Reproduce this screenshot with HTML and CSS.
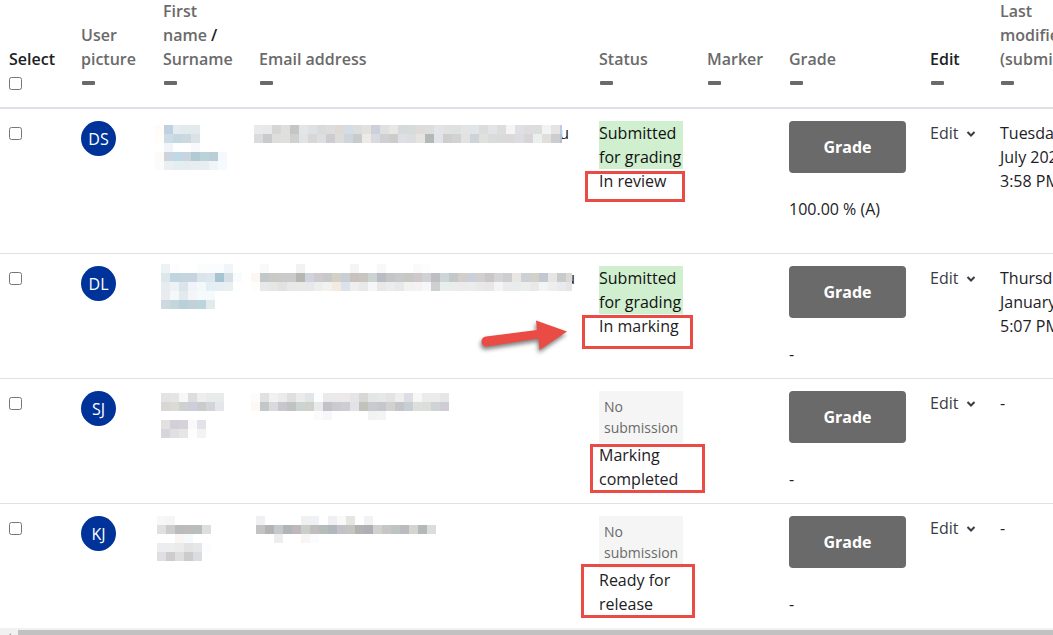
FILE: index.html
```html
<!DOCTYPE html>
<html lang="en">
<head>
    <meta charset="UTF-8">
    <meta name="viewport" content="width=device-width, initial-scale=1.0">
    <title>Submissions</title>
    <link rel="stylesheet" href="styles.css">
</head>
<body>

<main class="table-scroll">
    <table class="submissions">
        <colgroup>
            <col class="col-select">
            <col class="col-picture">
            <col class="col-name">
            <col class="col-email">
            <col class="col-status">
            <col class="col-marker">
            <col class="col-grade">
            <col class="col-edit">
            <col class="col-modified">
        </colgroup>
        <thead>
            <tr>
                <th scope="col">
                    <label for="selectAll">Select</label>
                    <div class="tick"><input type="checkbox" id="selectAll"></div>
                </th>
                <th scope="col"><a href="#">User picture</a><button class="collapse" aria-label="Hide User picture"></button></th>
                <th scope="col"><a href="#">First name</a> / <a href="#">Surname</a><button class="collapse" aria-label="Hide Full name"></button></th>
                <th scope="col"><a href="#">Email address</a><button class="collapse" aria-label="Hide Email address"></button></th>
                <th scope="col"><a href="#">Status</a><button class="collapse" aria-label="Hide Status"></button></th>
                <th scope="col"><a href="#">Marker</a><button class="collapse" aria-label="Hide Marker"></button></th>
                <th scope="col"><a href="#">Grade</a><button class="collapse" aria-label="Hide Grade"></button></th>
                <th scope="col">Edit<button class="collapse" aria-label="Hide Edit"></button></th>
                <th scope="col"><a href="#">Last modified (submission)</a><button class="collapse" aria-label="Hide Last modified"></button></th>
            </tr>
        </thead>
        <tbody>
            <tr class="row-tall">
                <td><div class="tick"><input type="checkbox" aria-label="Select DS"></div></td>
                <td><a class="avatar" href="#">DS</a></td>
                <td><svg class="mosaic name-ds" data-mosaic="nameDS" aria-hidden="true"></svg></td>
                <td><div class="email-end inset">u</div><svg class="mosaic email-ds" data-mosaic="emailDS" aria-hidden="true"></svg></td>
                <td>
                    <div class="submitted">Submitted for grading</div>
                    <div>In review</div>
                    <span class="mark mark-review"></span>
                </td>
                <td></td>
                <td><a class="grade-btn" href="#">Grade</a><div>100.00 % (A)</div></td>
                <td><button class="edit-btn">Edit<svg class="chevron" viewBox="0 0 10 8"><path d="M1.5 2l3.5 3.5L8.500 2"/></svg></button></td>
                <td>Tuesday,<br>July 2021,<br>3:58 PM</td>
            </tr>
            <tr>
                <td><div class="tick"><input type="checkbox" aria-label="Select DL"></div></td>
                <td><a class="avatar" href="#">DL</a></td>
                <td><svg class="mosaic name-dl" data-mosaic="nameDL" aria-hidden="true"></svg></td>
                <td><div class="email-end">u</div><svg class="mosaic email-dl" data-mosaic="emailDL" aria-hidden="true"></svg></td>
                <td>
                    <div class="submitted">Submitted for grading</div>
                    <div>In marking</div>
                    <span class="mark mark-marking"></span>
                    <svg class="arrow" viewBox="0 0 100 48" aria-hidden="true">
                        <path d="M11 21.500 L62 15 L61 5.500 L92 16.500 L64.500 35 L63.500 23.500 L12 31.500 A5 5 0 0 1 11 21.500 Z"/>
                    </svg>
                </td>
                <td></td>
                <td><a class="grade-btn" href="#">Grade</a><div>-</div></td>
                <td><button class="edit-btn">Edit<svg class="chevron" viewBox="0 0 10 8"><path d="M1.5 2l3.5 3.5L8.500 2"/></svg></button></td>
                <td>Thursday,<br>January<br>5:07 PM</td>
            </tr>
            <tr>
                <td><div class="tick"><input type="checkbox" aria-label="Select SJ"></div></td>
                <td><a class="avatar" href="#">SJ</a></td>
                <td><svg class="mosaic name-sj" data-mosaic="nameSJ" aria-hidden="true"></svg></td>
                <td><svg class="mosaic email-sj" data-mosaic="emailSJ" aria-hidden="true"></svg></td>
                <td>
                    <div class="no-submission">No submission</div>
                    <div>Marking completed</div>
                    <span class="mark mark-completed"></span>
                </td>
                <td></td>
                <td><a class="grade-btn" href="#">Grade</a><div>-</div></td>
                <td><button class="edit-btn">Edit<svg class="chevron" viewBox="0 0 10 8"><path d="M1.5 2l3.5 3.5L8.500 2"/></svg></button></td>
                <td>-</td>
            </tr>
            <tr>
                <td><div class="tick"><input type="checkbox" aria-label="Select KJ"></div></td>
                <td><a class="avatar" href="#">KJ</a></td>
                <td><svg class="mosaic name-kj" data-mosaic="nameKJ" aria-hidden="true"></svg></td>
                <td><svg class="mosaic email-kj" data-mosaic="emailKJ" aria-hidden="true"></svg></td>
                <td>
                    <div class="no-submission">No submission</div>
                    <div>Ready for release</div>
                    <span class="mark mark-release"></span>
                </td>
                <td></td>
                <td><a class="grade-btn" href="#">Grade</a><div>-</div></td>
                <td><button class="edit-btn">Edit<svg class="chevron" viewBox="0 0 10 8"><path d="M1.5 2l3.5 3.5L8.500 2"/></svg></button></td>
                <td>-</td>
            </tr>
        </tbody>
    </table>
</main>

<div class="scrollbar" aria-hidden="true">
    <svg class="scroll-left" viewBox="0 0 18 17"><path d="M11 5v8L7 9z"/></svg>
    <div class="thumb"></div>
</div>

<script src="script.js"></script>
</body>
</html>
```

FILE: styles.css
```css
:root {
    --text-color: #1d2125;
    --muted-color: #6a6a6a;
    --line-color: #dee2e6;
    --avatar-color: #003399;
    --mark-color: #ea4b45;
}

* {
    box-sizing: border-box;
    margin: 0;
    padding: 0;
}

body {
    font-family: 'Open Sans', 'Noto Sans', sans-serif;
    font-size: 16px;
    line-height: 24px;
    color: var(--text-color);
    background-color: #fff;
    overflow: hidden;
}

a {
    color: inherit;
    text-decoration: none;
}

button {
    font: inherit;
    border: none;
    background: none;
    cursor: pointer;
}

.table-scroll {
    overflow: hidden;
}

/* the table is scrolled slightly right and down */
.submissions {
    width: 100%;
    min-width: 1115px;
    margin: -13px 0 0 -3px;
    table-layout: fixed;
    border-collapse: separate;
    border-spacing: 0;
}

.col-select { width: 72px; }
.col-picture { width: 82px; }
.col-name { width: 96px; }
.col-status { width: 108px; }
.col-marker { width: 82px; }
.col-grade { width: 141px; }
.col-edit { width: 70px; }
.col-modified { width: 124px; }

th,
td {
    position: relative;
    padding: 12px;
    text-align: left;
}

th {
    font-weight: 600;
    vertical-align: bottom;
    border-bottom: 2px solid var(--line-color);
}

th a {
    color: var(--muted-color);
}

td {
    height: 125px;
    vertical-align: top;
    border-bottom: 1px solid var(--line-color);
}

.row-tall td {
    height: 145px;
}

tbody tr:last-child td {
    height: 124px;
    border-bottom: none;
}

.tick {
    display: flex;
    align-items: center;
    height: 24px;
}

.tick input {
    width: 13px;
    height: 13px;
}

.collapse {
    display: flex;
    align-items: center;
    height: 24px;
    padding-left: 1px;
}

.collapse::before {
    content: '';
    width: 13px;
    height: 4px;
    border-radius: 1px;
    background-color: var(--muted-color);
}

.avatar {
    display: flex;
    align-items: center;
    justify-content: center;
    width: 35px;
    height: 35px;
    border-radius: 50%;
    background-color: var(--avatar-color);
    color: #fff;
}

.submitted {
    background-color: #cfefcf;
    color: #111;
}

.no-submission {
    padding: 5px;
    font-size: 14px;
    line-height: 21px;
    background-color: #f5f5f5;
    color: var(--muted-color);
}

.grade-btn {
    display: block;
    margin-bottom: 24px;
    padding: 14px;
    border-radius: 4px;
    background-color: var(--muted-color);
    color: #fff;
    font-weight: 700;
    text-align: center;
}

.edit-btn {
    display: flex;
    align-items: center;
    gap: 8px;
    color: #3b3b45;
}

.chevron {
    width: 10px;
    height: 8px;
    margin-top: 2px;
    fill: none;
    stroke: currentColor;
    stroke-width: 2;
}

.email-end {
    text-align: right;
}

.email-end.inset {
    padding-right: 6px;
}

/* pixelated names and addresses */
.mosaic {
    position: absolute;
    shape-rendering: crispEdges;
}

.name-ds { left: 4px; top: 16px; }
.name-dl { left: 10px; top: 10px; }
.name-sj { left: 10px; top: 14px; }
.name-kj { left: 6px; top: 12px; }
.email-ds { left: 7px; top: 16px; }
.email-dl { left: 4px; top: 10px; }
.email-sj { left: 4px; top: 14px; }
.email-kj { left: 9px; top: 12px; }

/* red highlights over the workflow states */
.mark {
    position: absolute;
    border: 3px solid var(--mark-color);
}

.mark-review { left: -2px; top: 62px; width: 100px; height: 31px; }
.mark-marking { left: -5px; top: 61px; width: 111px; height: 34px; }
.mark-completed { left: 3px; top: 65px; width: 115px; height: 49px; }
.mark-release { left: -6px; top: 60px; width: 114px; height: 54px; }

.arrow {
    position: absolute;
    left: -112px;
    top: 61px;
    width: 100px;
    height: 48px;
    fill: var(--mark-color);
    filter: drop-shadow(-1px 3px 2px rgba(0, 0, 0, 0.5));
}

.scrollbar {
    display: flex;
    height: 17px;
    padding: 2px 0;
    background-color: #f1f1f1;
}

.scroll-left {
    flex: none;
    width: 18px;
    height: 17px;
    margin-top: -2px;
    fill: #a3a3a3;
}

.thumb {
    flex: 1;
    background-color: #c1c1c1;
}
```

FILE: script.js
```js
const CELL = 9;

// One string per row of cells, "-" leaves a cell empty
const mosaics = {
    nameDS: { width: 72, rows: [
        'fffcf8 bfd1e0 e4ecef e2eaec e3eaec',
        'fffdf8 cddce7 c6d8df cbd9df dbe3e9',
        '- f1f5f9 - - f7f9fc',
        'fdfaf8 cdd5dc bfd9e6 c8d5df b2cad2 bad2da b9ced6 f4f9fd',
        'fcfbfb e9eff3 e4edf0 e7edef e8edef e7edf0 f1f5f6 f4fafd'
    ] },
    emailDS: { width: 308, rows: [
        'e9eaec e7e8ea d6d7d5 dedfdf c5c6c3 e2e6e8 dfe0e1 d9dada dddddd ded9d3 d3dce7 dcdedd e2e1de cdd0da dfe0e2 e8e7e3 d7dada d7dbda dddcd9 dcdddc e2e5e7 e0e2e2 dfe1e1 e3e5e4 e0e5ea dcdddb e3e4e7 dcdddd f6f5f3 dfe0e5 dcdddc dbdedd f1f3f5 e5e4e2 bcc9e8',
        'dbdbdd c9cacc dddede e0dfde cfd0d2 e2e4e3 d7d7d7 dedede cfccd1 dcdcdd cfd5da c6cbce eeeae5 d9dae0 d0d0d2 cccccd dedfe4 dcddde e5e4e0 b3b8b9 e2e3e8 cececf d2d2d2 e1e2e1 ced3d8 dfe1df dbdbdb dadada dcd9db dddce1 d7d5d9 ebefed e0dfdb cdcdd0 b9bccd'
    ] },
    nameDL: { width: 81, rows: [
        'edf3f5 fdfdfd - - fafcfd fafcfd fafcfd f1f5f9',
        'dde6e9 c2d4de c5d5de c5d4de dbe4eb dce6ec a6c4d1 d6dfe6 f8fcff',
        'e7ecf0 ecf2f5 dbe3eb f0f4f8 f3f8fa e3eff5 e8eff2 e9f0f2',
        'e8ecf0 f4f8f9 e2eaee f2f6f8 f5fafb f5fbfd',
        'cdd9df c2d6dc b8d1d9 c2d0d9 bad5dc e2eaec'
    ] },
    emailDL: { width: 321, rows: [
        '- f8f9f8 - - - f2f2f2 - - - - - f3f5f4 - - f8f8f8 - - - fafafa fdfdfd',
        'fcf7f2 c0c8ca cbc9c6 cbcaca cbcacb b8b6b2 cfd3dc cdcbcd c8c8c8 d4d0c6 c8ced4 c7c2be c8c4c0 cbd3d1 bbbbc5 c4c6c5 c8c9ca c5c8c3 d0c7ca d0d1d2 bdbdc3 cdd6d7 c2c7c7 d3cec9 cacfda d1cfd0 c9c7c8 d4d3d6 cecdd0 e8e7e3 ccd1d6 d3d1c9 c2c8d2 e5e5e5 c7cccb d9dbd4',
        'fdfdfc e7e8e9 e6e6e7 e2e2e2 e8e8e8 e9e9e9 e8e8ea ebefee f4f1f1 f3ebe2 dbe2eb f0eded e9e9e9 f5f6f8 e8e8e9 ebedec e8e8e8 f3f1f1 f4f2f2 f7f7f9 cfcfd2 e8eeed e9eeed ebebeb ececec e9e9ea e7e7e8 f5f3f4 e9eceb e9ecec eceeed e9e9e9 f2f4f8 eeefed e8eaf0 e5e5e5'
    ] },
    nameSJ: { width: 63, rows: [
        'e3e3e4 e6e5e3 f6f7f8 dddddf edefee e8ebea e9ebea',
        'd9d7d5 dcdad5 cfd1d0 cdcddb c9cccb d2d4da e4e6e9',
        '-',
        'e2e0e0 d2d1d7 d5d3d9 f8f9f8 e2e2e8',
        'd8d5da e0e0e2 e7e5e8 fdfdfe f3f3f3'
    ] },
    emailSJ: { width: 198, rows: [
        'fffbf9 dfe2e1 f1f1f3 ebebec dddfe0 ebebeb e2e4e5 fbfdff ebe9ea ebe9ea ebe9eb e5e5e8 d7d7d6 e4e6e5 e6e7e7 e2e3e5 efeeef dddee4 f7f7f5 ebebeb ebebeb e5e6e7',
        'fef8f3 c2c8ca dadadc c6c8cd c1c2c2 ccd4d2 cfd1cc e7e9ea c5c2c7 cccad1 cecdd3 e3e3e7 c3c1bb c9cacf c7c6cc d1d1d2 c4c5cb c9ced5 dedfdd dbdedb ced3d3 cfcdd3',
        '- - - - - - - fdfbfa f6f7fa - - - - f4f2f1 f3f4f5'
    ] },
    nameKJ: { width: 54, rows: [
        'f7f7f7 f5f5f4',
        'e2dfe1 cccccc b8bcbb bdbcbb b8bebc dedede',
        '- - f8f5f3 f6f9fc',
        'ecedee ebeeec ecebeb e5e2e4 e6e6e8 fbfdff',
        'e0dee1 cdcdce dedede cdcccd dbdce1'
    ] },
    emailKJ: { width: 180, rows: [
        'f0f0f3 - - - - f0f0f0 eff2f5 - f0f0f3 f9f9f9 e4e6e2 - f1f2f1',
        'c4c3c3 b3b2b7 c3c8cc b0b5b8 bfb6be c9cec9 bfbdbe b6bbbb b2b6bd c1c2c9 c4c5bf b2b1b4 afaeb5 d1d0d1 c6c7c5 bec4c3 bcbbbf d5d4d1 b2b9b7 dbdcdc',
        '- - ededee - - f8f5f4 fafcff'
    ] }
};

document.querySelectorAll('[data-mosaic]').forEach(svg => {
    const mosaic = mosaics[svg.dataset.mosaic];
    svg.setAttribute('width', mosaic.width);
    svg.setAttribute('height', mosaic.rows.length * CELL);

    mosaic.rows.forEach((row, y) => {
        row.split(' ').forEach((color, x) => {
            if (color === '-') return;
            const rect = document.createElementNS('http://www.w3.org/2000/svg', 'rect');
            rect.setAttribute('x', x * CELL);
            rect.setAttribute('y', y * CELL);
            rect.setAttribute('width', CELL);
            rect.setAttribute('height', CELL);
            rect.setAttribute('fill', '#' + color);
            svg.appendChild(rect);
        });
    });
});
```
